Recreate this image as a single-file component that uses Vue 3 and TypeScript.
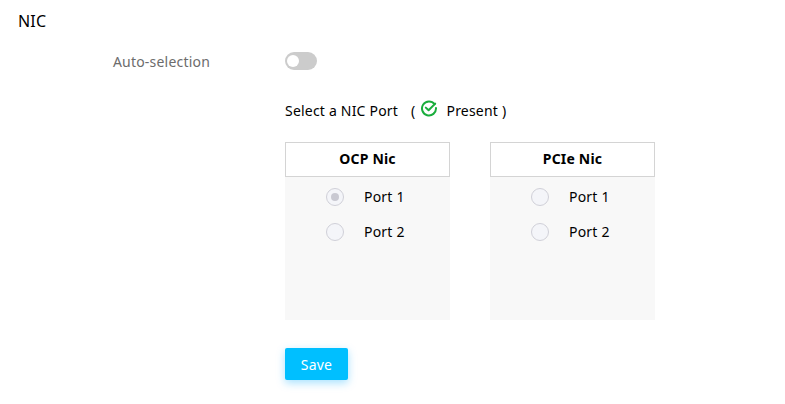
<template>
  <div class="page">
    <h3 class="title">NIC</h3>
    <div class="form-row">
      <label class="form-label">Auto-selection</label>
      <button class="switch" :class="{ on: autoSelect }" @click="autoSelect = !autoSelect"></button>
    </div>
    <div class="content">
      <div class="hint">
        <span>Select a NIC Port</span>
        <span class="paren">(</span>
        <svg class="check" width="18" height="18" viewBox="0 0 18 18" fill="none">
          <path d="M14.6 5.2A7 7 0 1 0 16 9" stroke="#1aad3c" stroke-width="2" stroke-linecap="round" />
          <path d="M5.8 8.6L8.6 11.3L15.2 4.6" stroke="#1aad3c" stroke-width="2" stroke-linecap="round" stroke-linejoin="round" />
        </svg>
        <span class="present">Present )</span>
      </div>
      <div class="cards">
        <div v-for="card in cards" :key="card.name" class="card">
          <div class="card-head">{{ card.name }}</div>
          <div class="card-body">
            <label v-for="port in card.ports" :key="port" class="port" @click="selected = card.name + port">
              <span class="radio" :class="{ checked: selected === card.name + port }"></span>
              <span>{{ port }}</span>
            </label>
          </div>
        </div>
      </div>
      <button class="save">Save</button>
    </div>
  </div>
</template>

<script setup lang="ts">
import { ref } from 'vue'

const autoSelect = ref(false)
const selected = ref('OCP NicPort 1')
const cards = [
  { name: 'OCP Nic', ports: ['Port 1', 'Port 2'] },
  { name: 'PCIe Nic', ports: ['Port 1', 'Port 2'] }
]
</script>

<style>
html,
body {
  margin: 0;
  background: #fff;
}
</style>

<style scoped>
.page {
  height: 404px;
  box-sizing: border-box;
  padding: 11px 0 0 18px;
  overflow: hidden;
  font-family: 'Noto Sans', 'Open Sans', sans-serif;
  font-size: 14px;
  letter-spacing: 0.2px;
  color: #000;
}

.title {
  margin: 0;
  font-size: 16px;
  font-weight: 400;
  line-height: 20px;
  height: 20px;
}

.form-row {
  display: flex;
  align-items: center;
  margin-top: 19px;
  height: 22px;
}

.form-label {
  width: 192px;
  text-align: right;
  color: #6c6c6c;
  margin-right: 75px;
}

.switch {
  width: 32px;
  height: 18px;
  padding: 0;
  border: 0;
  border-radius: 9px;
  background: #ccc;
  position: relative;
  cursor: pointer;
}

.switch::after {
  content: '';
  position: absolute;
  left: 2px;
  top: 3px;
  width: 12px;
  height: 12px;
  border-radius: 50%;
  background: #fff;
}

.switch.on {
  background: #00bfff;
}

.switch.on::after {
  left: 18px;
}

.content {
  margin-left: 267px;
}

.hint {
  display: flex;
  align-items: center;
  margin-top: 26px;
  height: 24px;
}

.paren {
  margin-left: 13px;
}

.check {
  margin-left: 5px;
  margin-top: -4px;
}

.present {
  margin-left: 8px;
}

.cards {
  display: flex;
  gap: 40px;
  margin-top: 20px;
}

.card {
  width: 165px;
}

.card-head {
  height: 33px;
  box-sizing: content-box;
  border: 1px solid #d4d4d4;
  width: 163px;
  line-height: 32px;
  text-align: center;
  font-weight: 700;
}

.card-body {
  height: 143px;
  padding-top: 2px;
  box-sizing: border-box;
  background: #f8f8f8;
}

.port {
  display: flex;
  align-items: center;
  height: 35px;
  padding-left: 41px;
  gap: 20px;
  cursor: pointer;
}

.radio {
  width: 16px;
  height: 16px;
  border: 1px solid #d0d0d8;
  border-radius: 50%;
  background: #f4f5f9;
  position: relative;
}

.radio.checked::after {
  content: '';
  position: absolute;
  left: 4px;
  top: 4px;
  width: 8px;
  height: 8px;
  border-radius: 50%;
  background: #c9c9d2;
}

.save {
  display: block;
  margin-top: 28px;
  width: 63px;
  height: 32px;
  padding: 0;
  border: 0;
  border-radius: 2px;
  background: #00bfff;
  color: #fff;
  font: inherit;
  letter-spacing: inherit;
  box-shadow: 0 3px 8px rgba(0, 170, 255, 0.35);
  cursor: pointer;
}
</style>
